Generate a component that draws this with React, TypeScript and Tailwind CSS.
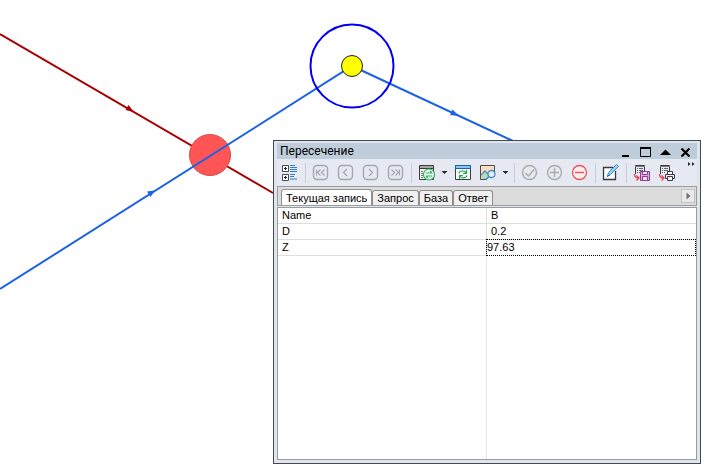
import { useState } from 'react';
import type { ReactNode } from 'react';

const tabs = ['Текущая запись', 'Запрос', 'База', 'Ответ'];

const rows = [
  { name: 'Name', value: 'B' },
  { name: 'D', value: '0.2' },
];

function Icon({ children }: { children: ReactNode }) {
  return (
    <svg width="17" height="17" viewBox="0 0 17 17" fill="none" aria-hidden="true">
      {children}
    </svg>
  );
}

function ToolButton({ label, disabled, children }: { label: string; disabled?: boolean; children: ReactNode }) {
  return (
    <button
      type="button"
      aria-label={label}
      disabled={disabled}
      className="flex h-[27px] w-[25px] shrink-0 items-center justify-center"
    >
      <Icon>{children}</Icon>
    </button>
  );
}

function DropButton({ label }: { label: string }) {
  return (
    <button type="button" aria-label={label} className="flex h-[27px] w-[11px] shrink-0 items-center justify-center">
      <svg width="7" height="5" viewBox="0 0 7 5" aria-hidden="true">
        <path d="M0.5 1h6L3.5 4z" fill="#1f2638" />
      </svg>
    </button>
  );
}

function Separator() {
  return (
    <div className="flex h-5 w-[6px] shrink-0 justify-center">
      <div className="w-px bg-[#c9ccd3]" />
    </div>
  );
}

// рамка кнопок навигации по записям
function NavButton({ label, d }: { label: string; d: string }) {
  return (
    <ToolButton label={label} disabled>
      <rect x="1.5" y="1.5" width="14" height="14" rx="3.5" stroke="#a6a7ab" strokeWidth="1.4" />
      <path d={d} stroke="#a6a7ab" strokeWidth="1.2" />
    </ToolButton>
  );
}

function ReportLines() {
  return (
    <>
      <path d="M2.5 10V1.5h9V7" stroke="#3b3b3f" />
      <path d="M2 2.5h10" stroke="#77777b" />
      <path d="M4 4.5h1M6 4.5h4M4 6.5h1M6 6.5h4M4 8.5h1M6 8.5h1" stroke="#66666a" />
      <path d="M1.5 10c0 3 1 4 4 4M3.5 11.5L6 14l-2.5 2.500" stroke="#ee4050" strokeWidth="1.3" />
    </>
  );
}

function Scheme() {
  return (
    <svg className="absolute inset-0 h-full w-full" aria-label="Схема пересечения">
      <path d="M0 34L273 193" stroke="#a80000" strokeWidth="2" />
      <path d="M134 112L125.500 110L128.500 105z" fill="#a80000" />
      <circle cx="210" cy="155" r="20.500" fill="#ff5555" stroke="#d94c4c" />
      <path d="M0 289L352 66L513 141" fill="none" stroke="#1b62e6" strokeWidth="2" />
      <path d="M155 190.500L150.500 197L147 191.500z" fill="#1b62e6" />
      <path d="M459 116L450 115L452.500 109.500z" fill="#1b62e6" />
      <circle cx="352" cy="66" r="41.500" fill="none" stroke="#0000f5" strokeWidth="2" />
      <circle cx="352" cy="66" r="10.500" fill="#ffff00" stroke="#222222" />
    </svg>
  );
}

function TitleBar() {
  return (
    <div className="flex h-4 items-center bg-[#bfcddb]">
      <h1 className="grow pl-[3px] font-['Roboto','Noto_Sans',sans-serif] text-[12px] leading-4">Пересечение</h1>
      <div className="flex pr-px">
        <button type="button" aria-label="Свернуть" className="flex h-4 w-5 items-center justify-center">
          <svg width="12" height="12" aria-hidden="true"><path d="M2 11h7" stroke="#000" strokeWidth="2" /></svg>
        </button>
        <button type="button" aria-label="Развернуть" className="flex h-4 w-5 items-center justify-center">
          <svg width="12" height="12" fill="none" stroke="#000" aria-hidden="true">
            <path d="M0 3h11" strokeWidth="2" />
            <path d="M0.500 3v8.500h10V3" />
          </svg>
        </button>
        <button type="button" aria-label="Скрыть панель" className="flex h-4 w-5 items-center justify-center">
          <svg width="12" height="12" aria-hidden="true"><path d="M0 10L5.500 4.500l5.500 5.500z" /></svg>
        </button>
        <button type="button" aria-label="Закрыть" className="flex h-4 w-5 items-center justify-center">
          <svg width="12" height="12" aria-hidden="true"><path d="M1.500 3.500l8 8M9.500 3.500l-8 8" stroke="#000" strokeWidth="2.200" /></svg>
        </button>
      </div>
    </div>
  );
}

function Toolbar() {
  return (
    <div role="toolbar" className="flex h-[27px] items-center bg-[#e6e9f1]">
      <ToolButton label="Структура">
        <path d="M1.500 1.500h6v6h-6zM1.500 10.500h6v6h-6z" fill="#fff" stroke="#4a4a4e" />
        <path d="M3 4.500h3M4.500 3v3M3 13.500h3M4.500 12v3" stroke="#222" />
        <path d="M9 1.500h5M9 3.500h7M9 5.500h7M9 7.500h7M9 10.500h5M9 12.500h4M9 15h7" stroke="#2c83c4" strokeWidth="1.200" />
      </ToolButton>
      <Separator />
      <NavButton label="Первая запись" d="M4.500 5.500v6M8.500 5.500l-3 3 3 3M12.500 5.500l-3 3 3 3" />
      <NavButton label="Предыдущая запись" d="M10 5L6.500 8.500 10 12" />
      <NavButton label="Следующая запись" d="M7 5l3.500 3.500L7 12" />
      <NavButton label="Последняя запись" d="M12.500 5.500v6M8.500 5.500l3 3-3 3M4.500 5.500l3 3-3 3" />
      <Separator />
      <ToolButton label="Обмен данными">
        <path d="M1.500 1.500h14v14h-14z" fill="#f5f2ee" stroke="#3b3b3f" />
        <path d="M2 2h13v2H2z" fill="#aaa6a3" />
        <path d="M1.500 4.500h14" stroke="#3b3b3f" />
        <path d="M3 7.500h2M3 9.500h2M3 11.500h2M3 13.500h2" stroke="#77777b" />
        <circle cx="11" cy="10.500" r="5.500" fill="#f4faf5" stroke="#20b55b" strokeWidth="1.200" />
        <path d="M8 9h6M12 7l2 2M14 12H8M10 14l-2-2" stroke="#20b55b" strokeWidth="1.200" />
      </ToolButton>
      <DropButton label="Варианты обмена" />
      <ToolButton label="Обновить">
        <path d="M1.500 1.500h15v14h-15z" fill="#fcfcfd" stroke="#3b3b3f" />
        <path d="M1 1h16v4H1z" fill="#1267ad" />
        <path d="M2 2h14v2H2z" fill="#8ac4ee" />
        <path d="M5 9.500c.5-3 5.500-3.500 7-.5M12.500 6v3.500H9M13 11.500c-1 3-5.500 3-7 .5M5.500 15v-3.500H9" stroke="#20a650" strokeWidth="1.200" />
      </ToolButton>
      <ToolButton label="Просмотр карты">
        <path d="M1.500 1.500h14v14h-14z" fill="#fbdcc2" stroke="#4c4c50" />
        <path d="M2 11l4-4 4 4v4H2z" fill="#b7dbb9" />
        <path d="M2 11l4-4 4 4" stroke="#4f91bc" strokeWidth="1.300" />
        <path d="M8 13h8v4H7z" fill="#e6e9f1" />
        <circle cx="12.500" cy="10" r="3.500" fill="#e5f1fa" stroke="#3b8dc6" strokeWidth="1.300" />
        <path d="M10 12.500L7 15.500" stroke="#3b8dc6" strokeWidth="1.600" />
      </ToolButton>
      <DropButton label="Варианты просмотра" />
      <Separator />
      <ToolButton label="Применить" disabled>
        <circle cx="8.500" cy="8.500" r="7" stroke="#aaa" strokeWidth="1.400" />
        <path d="M4.500 9l3 3 5.500-6.500" stroke="#aaa" strokeWidth="1.400" />
      </ToolButton>
      <ToolButton label="Добавить" disabled>
        <circle cx="8.500" cy="8.500" r="7" stroke="#aaa" strokeWidth="1.400" />
        <path d="M4 8.500h9M8.500 4v9" stroke="#aaa" strokeWidth="1.400" />
      </ToolButton>
      <ToolButton label="Удалить">
        <circle cx="8.500" cy="8.500" r="7" fill="#fbeef1" stroke="#f04f55" strokeWidth="1.300" />
        <path d="M4 8.500h9" stroke="#f04f55" strokeWidth="1.400" />
      </ToolButton>
      <Separator />
      <ToolButton label="Редактировать">
        <path d="M11 3.500H1.500v12h12V7" fill="#fafbfd" stroke="#3b3b3f" strokeWidth="1.300" />
        <path d="M5.500 12l1-3.500 8-8 2 2-8 8z" fill="#9bccec" stroke="#3b94d4" />
        <path d="M5 12.500l3-1.500" stroke="#25689c" />
      </ToolButton>
      <Separator />
      <ToolButton label="Сохранить отчёт">
        <ReportLines />
        <path d="M7.500 7.500h9v9h-9z" fill="#d7acde" stroke="#8c3b97" />
        <path d="M9.500 7.500h5v3h-5zM9.500 12.500h5v4h-5z" fill="#f3e7f5" stroke="#8c3b97" />
      </ToolButton>
      <ToolButton label="Печать отчёта">
        <ReportLines />
        <path d="M9.500 10V7.500h5V10" fill="#fff" stroke="#3b3b3f" />
        <path d="M7.500 10.500h9v4h-9z" fill="#f3f4f8" stroke="#3b3b3f" />
        <path d="M9.500 12.500h5v4h-5z" fill="#fff" stroke="#3b3b3f" />
      </ToolButton>
      <button type="button" aria-label="Другие команды" className="ml-auto flex h-[27px] w-3 items-start justify-center pt-[3px]">
        <svg width="7" height="5" viewBox="0 0 7 5" aria-hidden="true">
          <path d="M0 0l2.500 2L0 4zM4 0l2.500 2L4 4z" fill="#1f2638" />
        </svg>
      </button>
    </div>
  );
}

export default function App() {
  const [activeTab, setActiveTab] = useState(tabs[0]);
  const [z, setZ] = useState('97.63');

  return (
    <main className="relative h-screen overflow-hidden bg-white font-['Liberation_Sans',Arial,sans-serif] text-black">
      <Scheme />

      <section className="absolute top-[140px] right-px bottom-0 left-[273px] flex flex-col border border-[#4a484b] bg-[#dce6f0] px-[3px] pt-[2px] pb-[3px]">
        <TitleBar />
        <Toolbar />

        <div role="tablist" className="flex h-5 shrink-0 items-end border border-[#9b9b9b] bg-[#dcdcdc] pl-[3px]">
          {tabs.map((tab) => (
            <button
              key={tab}
              type="button"
              role="tab"
              aria-selected={activeTab === tab}
              onClick={() => setActiveTab(tab)}
              className={`shrink-0 rounded-t-[3px] border border-b-0 border-[#8e8e8e] px-[4px] text-[11px] whitespace-nowrap ${
                activeTab === tab ? 'h-4 bg-white leading-4' : 'h-[15px] bg-[#f0f0f0] leading-[14px]'
              }`}
            >
              {tab}
            </button>
          ))}
          <button
            type="button"
            aria-label="Прокрутить вкладки"
            className="mr-px mb-[2px] ml-auto flex h-[14px] w-[14px] items-center justify-center border border-[#c4c4c4] bg-[#e9e9e9]"
          >
            <svg width="5" height="8" viewBox="0 0 5 8" aria-hidden="true">
              <path d="M0.500 0.500v7L4.500 4z" fill="#707070" />
            </svg>
          </button>
        </div>

        <div className="mt-px flex grow flex-col border border-[#9b9b9b] bg-white">
          <table className="w-full table-fixed border-separate border-spacing-0 text-[11px]">
            <tbody>
              {rows.map((row) => (
                <tr key={row.name}>
                  <th scope="row" className="h-4 w-1/2 border-r border-b border-[#dedede] p-0 pl-[4px] text-left leading-[15px] font-normal">
                    {row.name}
                  </th>
                  <td className="h-4 border-b border-[#dedede] p-0 pl-[4px] leading-[15px]">{row.value}</td>
                </tr>
              ))}
              <tr>
                <th scope="row" className="h-4 border-r border-b border-[#dedede] p-0 pl-[4px] text-left leading-[15px] font-normal">
                  <label htmlFor="z-value">Z</label>
                </th>
                <td className="h-4 p-0">
                  <input
                    id="z-value"
                    value={z}
                    onChange={(e) => setZ(e.target.value)}
                    className="-mt-px -ml-px block h-[17px] w-[calc(100%+1px)] border border-dotted border-black bg-transparent pb-[2px] leading-[13px] outline-none"
                  />
                </td>
              </tr>
            </tbody>
          </table>
          <div className="flex grow">
            <div className="w-1/2 border-r border-[#e6e6e6]" />
          </div>
        </div>
      </section>
    </main>
  );
}
